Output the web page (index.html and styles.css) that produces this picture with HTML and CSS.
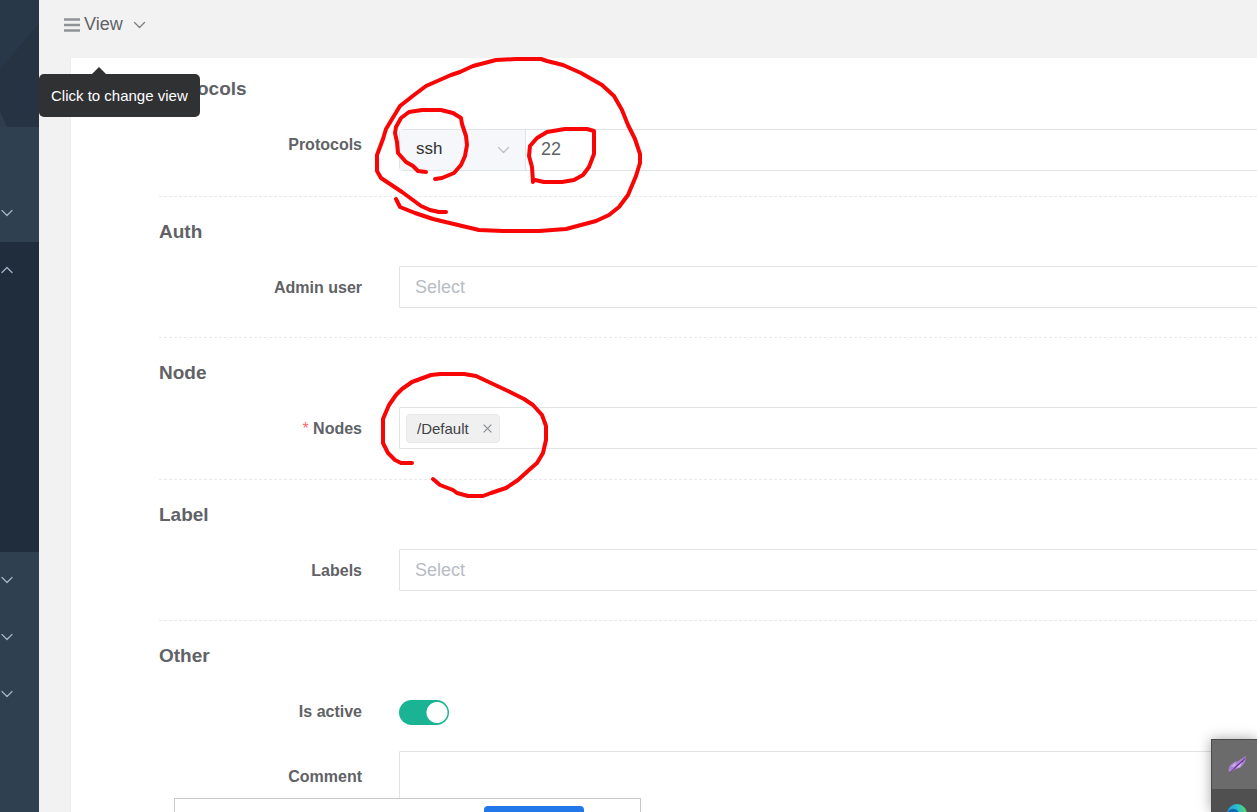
FILE: index.html
```html
<!DOCTYPE html>
<html lang="en">
<head>
<meta charset="utf-8">
<title>Asset form</title>
<link rel="stylesheet" href="styles.css">
</head>
<body>
<svg class="defs" aria-hidden="true"><symbol id="chevron" viewBox="0 0 12 8"><path d="M1 1.5 6 6.5 11 1.5" fill="none" stroke="currentColor" stroke-width="1.3" stroke-linecap="round" stroke-linejoin="round"/></symbol></svg>
<div class="app">
  <nav class="sidebar">
    <div class="profile">
      <svg viewBox="0 0 39 127" preserveAspectRatio="none" aria-hidden="true"><path d="M0 0H39V23L0 69Z" fill="#293848"/><path d="M39 23V127H7L0 112V69Z" fill="#253343"/><path d="M0 112 7 127H0Z" fill="#2f3d4d"/></svg>
    </div>
    <div class="menu-space"></div>
    <button class="menu-item" aria-label="Expand"><svg class="chevron"><use href="#chevron"/></svg></button>
    <div class="submenu">
      <button class="menu-item" aria-label="Collapse"><svg class="chevron up"><use href="#chevron"/></svg></button>
    </div>
    <button class="menu-item" aria-label="Expand"><svg class="chevron"><use href="#chevron"/></svg></button>
    <button class="menu-item" aria-label="Expand"><svg class="chevron"><use href="#chevron"/></svg></button>
    <button class="menu-item" aria-label="Expand"><svg class="chevron"><use href="#chevron"/></svg></button>
  </nav>
  <div class="page">
    <header class="topbar">
      <button class="view-button" aria-describedby="view-tip">
        <svg class="bars" viewBox="0 0 16 14" aria-hidden="true"><path d="M0 1.5H16M0 7H16M0 12.5H16" stroke="#909396" stroke-width="2.5"/></svg>
        <span>View</span>
        <svg class="chevron"><use href="#chevron"/></svg>
      </button>
      <div class="tooltip" id="view-tip" role="tooltip">Click to change view</div>
    </header>
    <main class="card">
      <form class="form">
        <section class="section protocols">
          <h3>Protocols</h3>
          <div class="row">
            <label for="port">Protocols</label>
            <div class="input-group">
              <div class="prepend">
                <select aria-label="Protocol"><option>ssh</option></select>
                <svg class="chevron"><use href="#chevron"/></svg>
              </div>
              <input id="port" type="text" value="22">
            </div>
          </div>
        </section>
        <section class="section">
          <h3>Auth</h3>
          <div class="row">
            <label for="admin">Admin user</label>
            <select class="control" id="admin"><option>Select</option></select>
          </div>
        </section>
        <section class="section node">
          <h3>Node</h3>
          <div class="row">
            <label id="nodes-label"><span class="required">*</span> Nodes</label>
            <div class="control tags" role="group" aria-labelledby="nodes-label">
              <span class="tag">/Default<button type="button" aria-label="Remove"><svg viewBox="0 0 10 10"><path d="M1.5 1.5 8.5 8.5M8.5 1.5 1.5 8.5" stroke="#8e9195" stroke-width="1.2"/></svg></button></span>
            </div>
          </div>
        </section>
        <section class="section">
          <h3>Label</h3>
          <div class="row">
            <label for="labels">Labels</label>
            <select class="control" id="labels"><option>Select</option></select>
          </div>
        </section>
        <section class="section last">
          <h3>Other</h3>
          <div class="row">
            <label for="active">Is active</label>
            <input class="switch" id="active" type="checkbox" checked>
          </div>
          <div class="row comment">
            <label for="comment">Comment</label>
            <textarea class="control" id="comment"></textarea>
          </div>
        </section>
      </form>
    </main>
  </div>
  <svg class="marks" aria-hidden="true">
    <g fill="none" stroke="#f80606" stroke-width="4" stroke-linecap="round" stroke-linejoin="round">
      <path d="M446 212 439 212 430 210 421 206 402 192 381 178 377 171 377 155 383 139 386 129 400 106 414 95 426 86 451 75 460 72 473 66 496 60 516 59 541 59 547 61 563 65 581 73 602 85 614 96 622 110 628 125 635 139 640 154 640 163 636 176 628 195 619 207 609 215 596 221 566 229 539 231 503 231 479 230 458 225 433 219 415 213 400 207 396 199"/>
      <path d="M426 172 418 171 413 166 406 162 398 153 397 142 395 133 396 127 401 118 409 112 422 110 441 110 453 113 461 118 462 124 466 136 467 145 465 156 461 165 454 173 442 178 435 179"/>
      <path d="M533 182 532 167 529 156 530 146 537 138 547 132 565 129 587 129 594 131 594 154 589 167 583 175 574 180 562 182 544 182 535 180"/>
      <path d="M412 463 401 463 395 460 388 453 383 443 383 419 389 405 396 395 402 389 412 382 431 375 440 374 464 374 476 376 493 384 508 391 524 399 533 405 542 415 546 426 546 440 543 453 537 463 529 470 518 480 506 488 491 493 483 496 468 496 457 493 453 490 440 485 433 479"/>
    </g>
  </svg>
  <div class="popup"><button aria-label="Confirm"></button></div>
  <aside class="dock">
    <button aria-label="Feather"><svg viewBox="0 0 20 20" aria-hidden="true"><path d="M2 17C0 12 5 7 11 6L19 1C19 8 15 13 9 14Z" fill="#a884cf"/><path d="M1 19 8 12 19 2C16 8 10 12 6 15Z" fill="#6f299f"/><path d="M4 12 9 7 8 11ZM9 13 15 7 13 12Z" fill="#d2bdea"/></svg></button>
    <button aria-label="Browser"><svg viewBox="0 0 20 20" aria-hidden="true"><defs><linearGradient id="wave"><stop stop-color="#2499df"/><stop offset=".55" stop-color="#28c5ca"/><stop offset="1" stop-color="#60d35c"/></linearGradient></defs><circle cx="10" cy="10" r="10" fill="url(#wave)"/><path d="M1 8C4 3 11 4 12 10H7C6 14 9 18 12 20C5 20 0 16 1 8Z" fill="#1269b5"/></svg></button>
  </aside>
</div>
</body>
</html>
```
FILE: styles.css
```css
* { box-sizing: border-box; }
body { margin: 0; font-family: "Liberation Sans", Arial, sans-serif; color: #606266; background: #f2f2f2; }
button, input, select, textarea { margin: 0; font-family: inherit; }
button { padding: 0; border: 0; background: none; color: inherit; }
.defs { position: absolute; width: 0; height: 0; }
.app { position: relative; display: flex; height: 100vh; overflow: hidden; }
.chevron { width: 12px; height: 8px; flex: none; }
.chevron.up { transform: rotate(180deg); }

.sidebar { display: flex; flex-direction: column; flex: none; width: 39px; background: #2f4050; color: #a0b4c5; }
.profile { flex: none; height: 127px; }
.profile svg { display: block; width: 100%; height: 100%; }
.menu-space { flex: none; height: 58px; }
.menu-item { display: flex; align-items: center; flex: none; width: 100%; height: 57px; padding: 0 0 2px 1px; }
.submenu { flex: none; height: 310px; background: #1f2d3d; }

.page { display: flex; flex: 1; flex-direction: column; min-width: 0; padding-left: 32px; }
.topbar { position: relative; display: flex; flex: none; height: 58px; align-items: flex-start; }
.view-button { display: flex; align-items: center; height: 49px; margin-left: -7px; font-size: 18px; }
.view-button span { margin: 0 10px 0 4px; }
.view-button .chevron { width: 13px; color: #7a7d82; }
.bars { width: 16px; height: 14px; }
.tooltip { position: absolute; z-index: 2; top: 74px; left: -32px; padding: 12px; border-radius: 5px; background: #303133; color: #fff; font-size: 15px; line-height: 19px; white-space: nowrap; }
.tooltip::before { content: ""; position: absolute; left: 53px; top: -7px; border: 7px solid transparent; border-top: 0; border-bottom-color: #303133; }

.card { flex: 1; min-height: 0; overflow: hidden; background: #fff; box-shadow: -1px 0 #ececec; }
.form { padding: 17px 0 0 88px; margin-right: -40px; }
.section { padding: 0 0 27px; border-bottom: 1px dashed #e7eaec; }
.section + .section { padding-top: 21px; }
.section.protocols { padding-bottom: 25px; }
.section.node { padding-bottom: 28px; }
.section.last { border: 0; }
h3 { margin: 0 0 20px; font-size: 19px; line-height: 28px; }
.row { display: grid; grid-template-columns: 203px minmax(0, 1fr); column-gap: 37px; align-items: start; }
.row label { text-align: right; font-size: 16px; font-weight: bold; line-height: 44px; }
.required { color: #f56c6c; font-weight: normal; }
.control { display: block; width: 100%; height: 42px; padding: 0 15px; border: 1px solid #e1e3e6; border-radius: 1px; background: #fff; appearance: none; color: #b8bcc5; font-size: 18px; }
.input-group { display: flex; height: 42px; margin-top: 6px; border: 1px solid #dfe2e7; border-radius: 4px; }
.prepend { display: flex; align-items: center; width: 126px; padding-right: 15px; border-right: 1px solid #dfe2e7; background: #f5f7fa; color: #bbbfc7; }
.prepend select { flex: 1; min-width: 0; height: 100%; padding: 0 0 3px 16px; border: 0; background: none; appearance: none; color: #303133; font-size: 17px; }
.prepend .chevron { width: 13px; }
.input-group input { flex: 1; min-width: 0; padding: 0 15px 2px; border: 0; background: none; color: #606266; font-size: 18px; }
.tags { display: flex; align-items: center; padding: 0 6px; }
.tag { display: flex; align-items: center; gap: 13px; height: 29px; padding: 0 6px 0 10px; border: 1px solid #e8e8e8; border-radius: 4px; background: #f0f0f0; color: #404144; font-size: 15px; }
.tag button { display: flex; }
.tag svg { width: 11px; height: 11px; }
.switch { width: 50px; height: 25px; margin-top: 10px; border-radius: 13px; background: radial-gradient(circle at 38px 50%, #fff 10px, #1ab394 11px); appearance: none; }
.comment { margin-top: 17px; }
.comment label { padding-top: 4px; }
.comment textarea { height: 100px; resize: none; }

.marks { position: absolute; z-index: 3; inset: 0; width: 100%; height: 100%; pointer-events: none; }
.popup { position: absolute; left: 174px; bottom: 0; display: flex; justify-content: flex-end; width: 467px; height: 14px; padding: 7px 56px 0 0; border: 1px solid #c8c8c8; border-bottom: 0; background: #fff; }
.popup button { width: 100px; height: 6px; border-radius: 4px 4px 0 0; background: #2277e9; }
.dock { position: absolute; right: 0; bottom: 0; width: 46px; height: 73px; overflow: hidden; border: solid #4b4b4b; border-width: 1px 0 0 1px; background: #505050; box-shadow: 0 0 12px rgba(0, 0, 0, .35); }
.dock button { display: flex; justify-content: center; width: 100%; height: 49px; padding: 15px 0 0 5px; background: #6b6b6b; }
.dock button + button { background: #505050; }
.dock svg { width: 20px; height: 20px; }
```
